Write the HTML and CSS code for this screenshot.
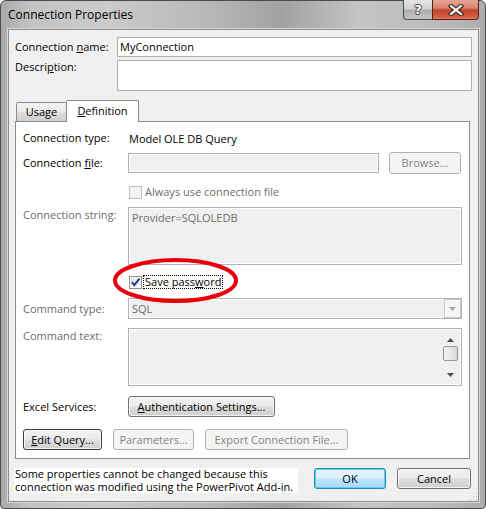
FILE: index.html
```html
<!DOCTYPE html>
<html>
<head>
<meta charset="utf-8">
<title>Connection Properties</title>
<link rel="stylesheet" href="styles.css">
</head>
<body>
<div class="window">
  <div class="titlebar">
    <span class="title">Connection Properties</span>
    <div class="caption-btns">
      <div class="cbtn help"><span class="help-glyph">?</span></div>
      <div class="cbtn close">
        <svg width="16" height="12" viewBox="0 0 16 12">
          <path d="M3 2 L13 10 M13 2 L3 10" stroke="#3a2a28" stroke-width="4.4" stroke-linecap="square" fill="none"/>
          <path d="M3 2 L13 10 M13 2 L3 10" stroke="#ffffff" stroke-width="2.2" stroke-linecap="square" fill="none"/>
        </svg>
      </div>
    </div>
  </div>

  <div class="client">
    <div class="top-rows">
      <div class="name-row">
        <span class="top-label">Connection <u>n</u>ame:</span>
        <div class="textbox">MyConnection</div>
      </div>
      <div class="desc-row">
        <span class="top-label">Descri<u>p</u>tion:</span>
        <div class="textbox tall"></div>
      </div>
    </div>

    <div class="tabs">
      <div class="tab">Usa<u>g</u>e</div>
      <div class="tab active"><u>D</u>efinition</div>
    </div>

    <div class="panel">
      <div class="row r-type">
        <span class="lbl">Connection type:</span>
        <span class="value">Model OLE DB Query</span>
      </div>
      <div class="row r-file">
        <span class="lbl">Connection <u>f</u>ile:</span>
        <div class="textbox disabled file-box"></div>
        <div class="btn disabled browse">Browse...</div>
      </div>
      <div class="row r-always">
        <span class="lbl"></span>
        <span class="check disabled"></span>
        <span class="check-text dim">Always use connection file</span>
      </div>
      <div class="row r-string">
        <span class="lbl dim top">Connection string:</span>
        <div class="textbox disabled area">Provider=SQLOLEDB</div>
      </div>
      <div class="row r-save">
        <span class="lbl"></span>
        <span class="check checked">
          <svg width="11" height="11" viewBox="0 0 11 11"><path d="M1.8 5.2 L4.3 8.2 L9.4 1.6" stroke="#233c91" stroke-width="2" fill="none"/></svg>
        </span>
        <span class="check-text focus">Save pass<u>w</u>ord</span>
      </div>
      <div class="row r-ctype">
        <span class="lbl dim">Command type:</span>
        <div class="combo">
          <span class="combo-text">SQL</span>
          <span class="combo-btn">
            <svg width="7" height="4" viewBox="0 0 7 4"><path d="M0 0 H7 L3.5 4 Z" fill="#a8a8a8"/></svg>
          </span>
        </div>
      </div>
      <div class="row r-ctext">
        <span class="lbl dim top">Command text:</span>
        <div class="textbox disabled area with-scroll">
          <div class="scrollbar">
            <span class="sb-arrow">
              <svg width="7" height="4" viewBox="0 0 7 4"><path d="M0 4 H7 L3.5 0 Z" fill="#4d4d4d"/></svg>
            </span>
            <span class="sb-thumb"></span>
            <span class="sb-arrow down">
              <svg width="7" height="4" viewBox="0 0 7 4"><path d="M0 0 H7 L3.5 4 Z" fill="#4d4d4d"/></svg>
            </span>
          </div>
        </div>
      </div>
      <div class="row r-excel">
        <span class="lbl">Excel Services:</span>
        <div class="btn auth"><u>A</u>uthentication Settings...</div>
      </div>
      <div class="row r-buttons">
        <div class="btn edit"><u>E</u>dit Query...</div>
        <div class="btn disabled params">Parameters...</div>
        <div class="btn disabled export">Export Connection File...</div>
      </div>
    </div>

    <div class="footer">
      <div class="message">
        <span class="msg-line">Some properties cannot be changed because this</span>
        <span class="msg-line">connection was modified using the PowerPivot Add-in.</span>
      </div>
      <div class="btn default ok">OK</div>
      <div class="btn cancel">Cancel</div>
    </div>

    <svg class="grip" width="9" height="9" viewBox="0 0 9 9">
      <rect x="7" y="1" width="1" height="1" fill="#b8b8b8"/>
      <rect x="4" y="4" width="1" height="1" fill="#b8b8b8"/>
      <rect x="7" y="4" width="1" height="1" fill="#b8b8b8"/>
      <rect x="1" y="7" width="1" height="1" fill="#b8b8b8"/>
      <rect x="4" y="7" width="1" height="1" fill="#b8b8b8"/>
      <rect x="7" y="7" width="1" height="1" fill="#b8b8b8"/>
    </svg>
  </div>

  <svg class="annotation" width="130" height="48" viewBox="0 0 130 48">
    <ellipse cx="64.5" cy="23.5" rx="60.5" ry="20.5" fill="none" stroke="#e8000b" stroke-width="4"/>
  </svg>
</div>
</body>
</html>
```

FILE: styles.css
```css
* { box-sizing: border-box; }

html, body {
  margin: 0;
  padding: 0;
}

body {
  width: 486px;
  height: 509px;
  overflow: hidden;
  background: #ffffff;
  font-family: "Open Sans", "Noto Sans", sans-serif;
  font-size: 11px;
  color: #000;
}

u { text-decoration: underline; text-underline-offset: 1px; }

.window {
  position: relative;
  width: 486px;
  height: 509px;
  border: 1px solid #4b4b4b;
  border-radius: 6px 6px 4px 4px;
  background: linear-gradient(90deg, #a9a9a9 0%, #c3c3c3 6%, #cbcbcb 22%, #b8b8b8 42%, #a2a2a2 58%, #c4c4c4 74%, #bdbdbd 88%, #adadad 100%);
  padding: 0 6px 6px 7px;
  display: flex;
  flex-direction: column;
}

.titlebar {
  height: 28px;
  display: flex;
  align-items: flex-start;
  justify-content: space-between;
}

.title {
  font-size: 12px;
  line-height: 16px;
  margin-top: 6px;
  color: #000;
}

.caption-btns {
  display: flex;
  margin-top: -1px;
}

.cbtn {
  height: 20px;
  border: 1px solid #4a4a4a;
  border-top: none;
  display: flex;
  align-items: center;
  justify-content: center;
}

.help {
  width: 29px;
  border-radius: 0 0 0 4px;
  border-right: none;
  background: linear-gradient(180deg, #e4e4e4 0%, #d2d2d2 45%, #aeaeae 55%, #c6c6c6 100%);
}

.help-glyph {
  font-family: "DejaVu Sans", sans-serif;
  font-weight: bold;
  font-size: 13px;
  line-height: 14px;
  color: #fff;
  text-shadow: 1px 0 0 #3c3c3c, -1px 0 0 #3c3c3c, 0 1px 0 #3c3c3c, 0 -1px 0 #3c3c3c;
}

.close {
  width: 47px;
  border-radius: 0 0 4px 0;
  border-color: #5a2216;
  background: linear-gradient(180deg, #e7a796 0%, #d78671 40%, #c4432b 55%, #d15a3f 85%, #e07b5f 100%);
}

.client {
  position: relative;
  flex: 1;
  background: #f0f0f0;
  border: 1px solid #8c8c8c;
  box-shadow: 0 0 0 1px #d8d8d8;
  display: flex;
  flex-direction: column;
}

.top-rows {
  padding: 7px 6px 0 6px;
}

.name-row {
  display: flex;
  align-items: center;
  height: 20px;
}

.desc-row {
  display: flex;
  align-items: flex-start;
  height: 31px;
  margin-top: 3px;
}

.top-label {
  width: 102px;
  flex: none;
  line-height: 14px;
}

.textbox {
  flex: 1;
  height: 20px;
  background: #fff;
  border: 1px solid #abadb3;
  padding: 0 2px;
  line-height: 18px;
  white-space: nowrap;
}

.textbox.tall { height: 31px; }

.tabs {
  display: flex;
  align-items: flex-end;
  height: 21px;
  margin: 9px 0 0 7px;
}

.tab {
  height: 19px;
  width: 51px;
  border: 1px solid #898c95;
  border-bottom: none;
  border-radius: 2px 2px 0 0;
  background: linear-gradient(180deg, #f2f2f2 0%, #ebebeb 50%, #dddddd 50%, #cfcfcf 100%);
  text-align: center;
  line-height: 18px;
}

.tab.active {
  position: relative;
  z-index: 1;
  width: 73px;
  height: 22px;
  margin-left: -1px;
  margin-bottom: -1px;
  background: #fff;
  line-height: 20px;
}

.panel {
  margin: 0 8px 0 6px;
  border: 1px solid #898c95;
  background: #fff;
  padding: 6px 7px 8px 7px;
  display: flex;
  flex-direction: column;
}

.row {
  display: flex;
  align-items: center;
}

.lbl {
  width: 105px;
  flex: none;
  line-height: 16px;
  white-space: nowrap;
}

.lbl.top { align-self: flex-start; }

.dim { color: #6d6d6d; }

.value { padding-left: 1px; }

.r-type { height: 20px; }
.r-file { height: 22px; margin-top: 4px; }
.r-always { height: 16px; margin-top: 10px; }
.r-string { height: 58px; margin-top: 7px; }
.r-save { height: 16px; margin-top: 9px; }
.r-ctype { height: 21px; margin-top: 8px; }
.r-ctext { height: 58px; margin-top: 9px; }
.r-excel { height: 21px; margin-top: 10px; }
.r-buttons { height: 21px; margin-top: 12px; }

.textbox.disabled {
  background: #f0f0f0;
  border-color: #adb2b5;
  box-shadow: inset 0 0 0 1px #fff;
  color: #6d6d6d;
}

.file-box {
  flex: none;
  width: 251px;
}

.textbox.area {
  flex: none;
  width: 334px;
  height: 58px;
  line-height: 16px;
  padding: 2px 3px;
  align-self: stretch;
}

.btn {
  height: 21px;
  border: 1px solid #707070;
  border-radius: 3px;
  background: linear-gradient(180deg, #f2f2f2 0%, #ebebeb 48%, #dddddd 52%, #cfcfcf 100%);
  box-shadow: inset 0 0 0 1px rgba(255,255,255,0.75);
  text-align: center;
  line-height: 19px;
  white-space: nowrap;
  flex: none;
}

.btn.disabled {
  background: #f4f4f4;
  border-color: #adb2b5;
  box-shadow: none;
  color: #838383;
}

.browse {
  width: 72px;
  height: 22px;
  line-height: 20px;
  margin-left: 10px;
}

.check {
  width: 13px;
  height: 13px;
  flex: none;
  margin-left: 1px;
  border: 1px solid #8e8f8f;
  background: linear-gradient(135deg, #dcdcdc 0%, #f6f6f6 70%, #ffffff 100%);
  box-shadow: inset 0 0 0 1px #f4f4f4;
  display: flex;
  align-items: center;
  justify-content: center;
}

.check.disabled {
  border-color: #bcbcbc;
  background: #f4f4f4;
}

.check-text {
  margin-left: 3px;
  line-height: 14px;
}

.check-text.focus {
  margin-left: 1px;
  border: 1px dotted #000;
  padding: 0 1px;
  line-height: 12px;
  height: 14px;
}

.combo {
  width: 334px;
  height: 21px;
  border: 1px solid #adb2b5;
  background: #f0f0f0;
  box-shadow: inset 0 0 0 1px #fff;
  display: flex;
  align-items: stretch;
  justify-content: space-between;
  color: #6d6d6d;
}

.combo-text {
  padding-left: 3px;
  line-height: 19px;
}

.combo-btn {
  width: 17px;
  border: 1px solid #c9c9c9;
  background: #f6f6f6;
  display: flex;
  align-items: center;
  justify-content: center;
}

.with-scroll {
  display: flex;
  justify-content: flex-end;
  padding: 0;
}

.scrollbar {
  width: 17px;
  display: flex;
  flex-direction: column;
  align-items: center;
  justify-content: space-between;
  padding: 0 0 0 1px;
}

.sb-arrow {
  height: 17px;
  width: 15px;
  display: flex;
  align-items: center;
  justify-content: center;
}

.sb-thumb {
  width: 15px;
  height: 15px;
  border: 1px solid #979797;
  border-radius: 2px;
  background: linear-gradient(90deg, #f3f3f3 0%, #e8e8e8 50%, #d6d6d6 100%);
  margin-top: -8px;
}

.auth { width: 147px; }

.edit {
  width: 79px;
  border-color: #3c3c3c;
}

.params { width: 81px; margin-left: 11px; }
.export { width: 143px; margin-left: 11px; }

.footer {
  display: flex;
  align-items: flex-start;
  margin-top: 9px;
  padding: 0 7px 0 5px;
}

.message {
  width: 284px;
  height: 25px;
  background: #fff;
  padding: 0 1px;
  display: flex;
  flex-direction: column;
  flex: none;
}

.msg-line {
  display: block;
  height: 12.5px;
  line-height: 12.5px;
  white-space: nowrap;
}

.ok {
  width: 72px;
  margin-left: 16px;
}

.btn.default {
  border-color: #3c7fb1;
  box-shadow: inset 0 0 0 1px #48d8fb;
  background: linear-gradient(180deg, #eaf6fd 0%, #d9f0fc 48%, #bee6fd 52%, #a7d9f5 100%);
}

.cancel {
  width: 74px;
  margin-left: 11px;
}

.grip {
  position: absolute;
  right: 0;
  bottom: 0;
}

.annotation {
  position: absolute;
  left: 110px;
  top: 256px;
}
```
